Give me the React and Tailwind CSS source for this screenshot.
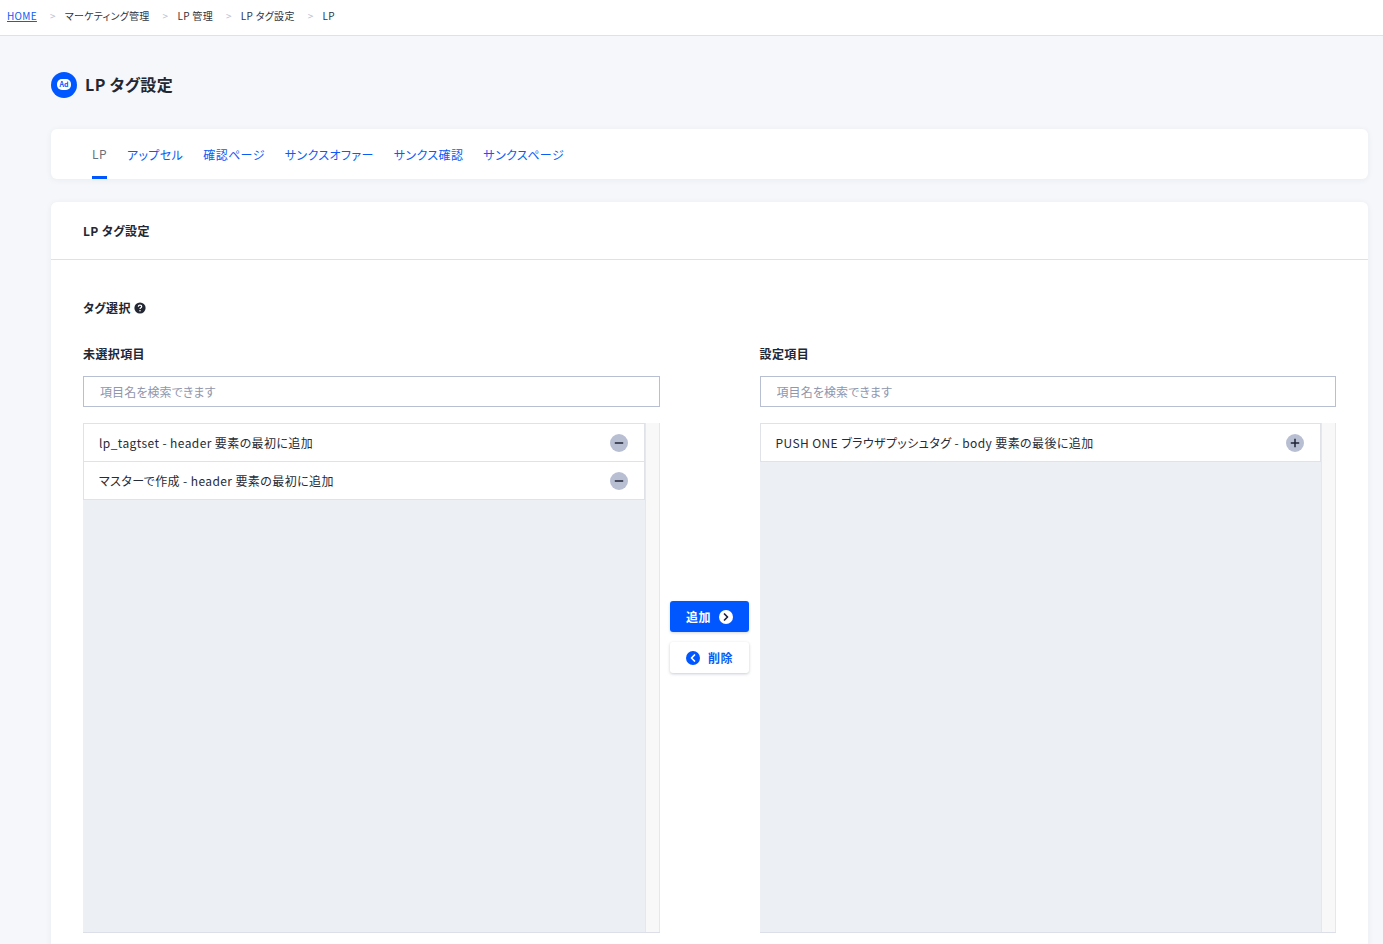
import { ChevronLeft, ChevronRight } from 'lucide-react';

const crumbs = ['マーケティング管理', 'LP 管理', 'LP タグ設定', 'LP'];
const tabs = ['アップセル', '確認ページ', 'サンクスオファー', 'サンクス確認', 'サンクスページ'];

function RoundIcon({ type }) {
  return (
    <span className="flex h-[18px] w-[18px] shrink-0 items-center justify-center rounded-full bg-[#b9bfd3]">
      <svg viewBox="0 0 18 18" className="h-[18px] w-[18px]" fill="none" stroke="#1f2433" strokeWidth="1.5">
        <path d="M4.8 9h8.4" />
        {type === 'plus' && <path d="M9 4.8v8.4" />}
      </svg>
    </span>
  );
}

function TagList({ items, icon }) {
  return (
    <div className="flex h-[510px] border-b border-[#dcdfe8]">
      <div className="min-w-0 flex-1 bg-[#eceff4]">
        {items.map((item) => (
          <div
            key={item}
            className="flex h-[38px] items-center justify-between border border-t-0 border-[#dfe2e8] bg-white pl-[15px] pr-[16px] text-[12px] tracking-[0.4px] text-[#262b36] first:h-[39px] first:border-t"
          >
            <span className="truncate">{item}</span>
            <RoundIcon type={icon} />
          </div>
        ))}
      </div>
      <div className="w-[15px] shrink-0 border-x border-[#e6e7ea] bg-[#f8f8f9]" />
    </div>
  );
}

function Column({ label, items, icon }) {
  return (
    <div className="min-w-0 flex-1">
      <p className="mb-[12px] h-[21px] text-[12px] leading-[21px] font-bold tracking-[0.4px] text-[#232733]">{label}</p>
      <input
        placeholder="項目名を検索できます"
        className="mb-4 block h-[31px] w-full border border-[#b9bfd3] bg-white px-4 text-[12px] tracking-[0.1px] text-[#262b36] outline-none placeholder:text-[#8f96ad]"
      />
      <TagList items={items} icon={icon} />
    </div>
  );
}

export default function App() {
  return (
    <div
      className="h-[944px] overflow-hidden bg-[#f5f7fa] [font-feature-settings:'palt']"
      style={{ fontFamily: '"Noto Sans CJK JP", "Noto Sans", sans-serif' }}
    >
      <nav className="flex h-[36px] items-center border-b border-[#dfe1e8] bg-white pb-[4px] pl-[7px] text-[10px] tracking-[0.3px] text-[#30343f]">
        <a href="#" className="text-[#0a5cf5] underline">HOME</a>
        {crumbs.map((c) => (
          <span key={c} className="flex items-center">
            <span className="mr-[9px] ml-[13px] text-[#b9bfd3]">&gt;</span>
            {c}
          </span>
        ))}
      </nav>

      <div className="pl-[51px] pr-[15px]">
        <div className="flex h-[93px] items-center gap-2 pt-[4px]">
          <span className="flex h-[26px] w-[26px] items-center justify-center rounded-full bg-[#0057ff]">
            <span className="flex h-[11px] w-[14px] items-center justify-center rounded-[5px] bg-white text-[7px] leading-none font-bold text-[#0057ff]">Ad</span>
          </span>
          <h1 className="mb-[2px] text-[16px] font-bold tracking-[0.4px] text-[#232733]">LP タグ設定</h1>
        </div>

        <div className="flex h-[50px] items-stretch gap-5 rounded-md bg-white pl-[41px] text-[12px] tracking-[0.4px] shadow-[0_1px_6px_rgba(40,50,80,0.06)]">
          <span className="flex items-center border-b-[3px] border-[#0057ff] pt-[3px] text-[#6b6f7a]">LP</span>
          {tabs.map((t) => (
            <a key={t} href="#" className="flex items-center pt-[1px] text-[#0a5cf5]">{t}</a>
          ))}
        </div>

        <div className="mt-[23px] rounded-t-md bg-white shadow-[0_1px_6px_rgba(40,50,80,0.06)]">
          <div className="flex h-[58px] items-center border-b border-[#dfe1e8] pl-8">
            <h2 className="text-[12px] font-bold tracking-[0.4px] text-[#232733]">LP タグ設定</h2>
          </div>
          <div className="px-8 pt-[37px] pb-6">
            <div className="mb-[25px] flex h-[21px] items-center gap-[3px] text-[12px] font-bold tracking-[0.4px] text-[#232733]">
              タグ選択
              <svg viewBox="0 0 12 12" className="h-3 w-3">
                <circle cx="6" cy="6" r="5.6" fill="#232733" />
                <path d="M4.3 4.7c0-1 .8-1.5 1.7-1.5s1.7.5 1.7 1.4c0 1.2-1.7 1.2-1.7 2.4" fill="none" stroke="#fff" strokeWidth="1.2" />
                <circle cx="6" cy="8.8" r=".8" fill="#fff" />
              </svg>
            </div>
            <div className="flex">
              <Column
                label="未選択項目"
                icon="minus"
                items={['lp_tagtset - header 要素の最初に追加', 'マスターで作成 - header 要素の最初に追加']}
              />
              <div className="flex w-[100px] shrink-0 flex-col items-center pt-[258px]">
                <button className="flex h-[31px] w-[79px] items-center justify-center gap-2 rounded-[3px] bg-[#0057ff] text-[12px] font-bold tracking-[0.4px] text-white shadow-[0_1px_3px_rgba(40,50,80,0.2)]">
                  追加
                  <span className="flex h-[14px] w-[14px] items-center justify-center rounded-full bg-white">
                    <ChevronRight size={12} strokeWidth={3.5} color="#1a2340" />
                  </span>
                </button>
                <button className="mt-[10px] flex h-[31px] w-[79px] items-center justify-center gap-2 rounded-[3px] bg-white text-[12px] font-bold tracking-[0.4px] text-[#0a5cf5] shadow-[0_1px_3px_rgba(40,50,80,0.25)]">
                  <span className="flex h-[14px] w-[14px] items-center justify-center rounded-full bg-[#0057ff]">
                    <ChevronLeft size={12} strokeWidth={3.5} color="#fff" />
                  </span>
                  削除
                </button>
              </div>
              <Column
                label="設定項目"
                icon="plus"
                items={['PUSH ONE ブラウザプッシュタグ - body 要素の最後に追加']}
              />
            </div>
          </div>
        </div>
      </div>
    </div>
  );
}
